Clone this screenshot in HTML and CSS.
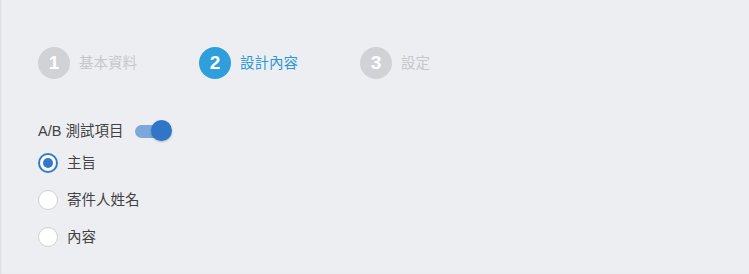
FILE: index.html
```html
<!DOCTYPE html>
<html lang="zh-Hant">
<head>
<meta charset="utf-8">
<link rel="stylesheet" href="styles.css">
</head>
<body>
<div class="page">
  <div class="steps">
    <div class="step">
      <span class="num">1</span>
      <span class="label">基本資料</span>
    </div>
    <div class="step active">
      <span class="num">2</span>
      <span class="label">設計內容</span>
    </div>
    <div class="step">
      <span class="num">3</span>
      <span class="label">設定</span>
    </div>
  </div>

  <div class="ab-row">
    <span class="ab-label">A/B 測試項目</span>
    <span class="toggle"><span class="track"></span><span class="knob"></span></span>
  </div>

  <div class="radios">
    <label class="radio-row"><span class="radio checked"></span><span class="radio-text">主旨</span></label>
    <label class="radio-row"><span class="radio"></span><span class="radio-text">寄件人姓名</span></label>
    <label class="radio-row"><span class="radio"></span><span class="radio-text">內容</span></label>
  </div>
</div>
</body>
</html>
```

FILE: styles.css
```css
html, body {
  margin: 0;
  padding: 0;
  height: 100%;
}
body {
  background: #edeef2;
  font-family: "Liberation Sans", "Noto Sans CJK TC", sans-serif;
  box-shadow: inset 2px 0 2px -1px rgba(0,0,0,0.08);
}
.page {
  padding: 47px 0 0 38px;
}
.steps {
  display: flex;
}
.step {
  width: 161px;
  display: flex;
  align-items: center;
  gap: 9px;
}
.num {
  width: 32px;
  height: 32px;
  border-radius: 50%;
  background: #d1d2d5;
  color: #ffffff;
  font-family: "Liberation Sans", Roboto, sans-serif;
  font-weight: 700;
  font-size: 19px;
  display: flex;
  align-items: center;
  justify-content: center;
  flex: none;
}
.label {
  font-size: 14.5px;
  color: #c6c7ca;
  line-height: 20px;
}
.step.active .num {
  background: #2e9edd;
}
.step.active .label {
  color: #2b98d6;
}
.ab-row {
  margin-top: 41px;
  height: 22px;
  display: flex;
  align-items: center;
  gap: 12px;
}
.ab-label {
  font-size: 14.5px;
  color: #424242;
  line-height: 20px;
}
.toggle {
  position: relative;
  width: 37px;
  height: 22px;
  flex: none;
}
.track {
  position: absolute;
  left: 0;
  top: 5px;
  width: 33px;
  height: 13px;
  border-radius: 7px;
  background: #7ba7da;
}
.knob {
  position: absolute;
  left: 16px;
  top: 0;
  width: 21px;
  height: 21px;
  border-radius: 50%;
  background: #2f77c6;
  box-shadow: 0 1px 2px rgba(0,0,0,0.25);
}
.radios {
  margin-top: 2px;
  display: flex;
  flex-direction: column;
}
.radio-row {
  height: 37px;
  display: flex;
  align-items: center;
  gap: 9px;
}
.radio {
  box-sizing: border-box;
  width: 20px;
  height: 20px;
  border-radius: 50%;
  background: #ffffff;
  border: 1px solid #d0d0d3;
  flex: none;
  display: flex;
  align-items: center;
  justify-content: center;
}
.radio.checked {
  border: 2px solid #3479c7;
}
.radio.checked::after {
  content: "";
  width: 10px;
  height: 10px;
  border-radius: 50%;
  background: #3479c7;
}
.radio-text {
  font-size: 14.5px;
  color: #424242;
  line-height: 20px;
}
```
